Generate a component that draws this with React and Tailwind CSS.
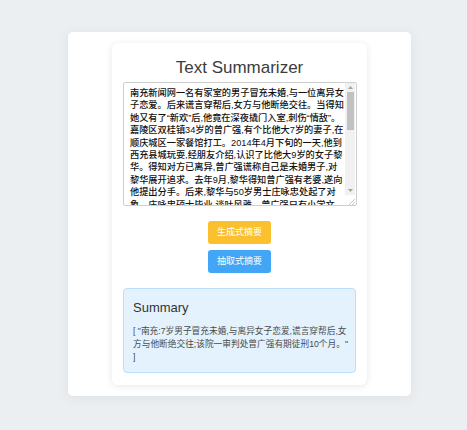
import { useState } from 'react';

const SOURCE_TEXT =
  '南充新闻网一名有家室的男子冒充未婚,与一位离异女子恋爱。后来谎言穿帮后,女方与他断绝交往。当得知她又有了“新欢”后,他竟在深夜撬门入室,刺伤“情敌”。嘉陵区双桂镇34岁的曾广强,有个比他大7岁的妻子,在顺庆城区一家餐馆打工。2014年4月下旬的一天,他到西充县城玩耍,经朋友介绍,认识了比他大9岁的女子黎华。得知对方已离异,曾广强谎称自己是未婚男子,对黎华展开追求。去年9月,黎华得知曾广强有老婆,遂向他提出分手。后来,黎华与50岁男士庄咏忠处起了对象。庄咏忠硕士毕业,谈吐风雅。曾广强只有小学文化,自叹不如。今年1月的一天深夜,曾广强撬门进入黎华家中,持刀将庄咏忠刺伤。';

const SUMMARY =
  '[ "南充:7岁男子冒充未婚,与离异女子恋爱,谎言穿帮后,女方与他断绝交往;该院一审判处曾广强有期徒刑10个月。" ]';

const font = "font-['Liberation_Sans','Noto_Sans_CJK_SC',sans-serif]";

// fake classic scrollbar drawn over the textarea's right edge
const Scrollbar = () => (
  <div className="absolute top-[1px] right-[1px] bottom-[1px] w-[10px] flex flex-col pointer-events-none">
    <div className="h-[9px] bg-[#f1f1f1] flex items-center justify-center">
      <svg width="5" height="3" viewBox="0 0 5 3">
        <polygon points="0,3 2.5,0 5,3" fill="#a3a3a3" />
      </svg>
    </div>
    <div className="flex-1 bg-[#f1f1f1] px-[1.5px]">
      <div className="h-[38px] bg-[#c1c1c1]" />
    </div>
    <div className="h-[9px] bg-[#f1f1f1] flex items-center justify-center">
      <svg width="5" height="3" viewBox="0 0 5 3">
        <polygon points="0,0 5,0 2.5,3" fill="#a3a3a3" />
      </svg>
    </div>
    <div className="h-[10px] bg-white flex items-end justify-end">
      <svg width="7" height="7" viewBox="0 0 7 7">
        <line x1="1" y1="7" x2="7" y2="1" stroke="#b5b5b5" strokeWidth="0.8" />
        <line x1="4" y1="7" x2="7" y2="4" stroke="#b5b5b5" strokeWidth="0.8" />
      </svg>
    </div>
  </div>
);

const App = () => {
  const [text, setText] = useState(SOURCE_TEXT);

  return (
    <div className={`min-h-screen bg-[#eceff1] pt-[32px] ${font}`}>
      <div className="ml-[68px] w-[343px] bg-white rounded-[5px] p-[11px] shadow-[0_2px_14px_rgba(0,0,0,0.06)]">
        <div className="mx-auto w-[255px] bg-white rounded-[6px] px-[11px] pt-[15px] pb-[12px] shadow-[0_1px_7px_rgba(0,0,0,0.1)]">
          <h1 className="text-center text-[17px] leading-[20px] text-[#3c3c3c]">Text Summarizer</h1>

          <div className="relative mt-[4px]">
            <textarea
              value={text}
              onChange={(e) => setText(e.target.value)}
              className="block w-[234px] h-[124px] resize-none overflow-hidden border border-[#cfcfcf] rounded-[2px] pl-[6px] pr-[10.5px] pt-[4px] text-[9.2px] leading-[12.4px] font-medium text-[#111] outline-none"
            />
            <Scrollbar />
          </div>

          <div className="flex flex-col items-center gap-[6px] mt-[15px]">
            <button className="w-[63px] h-[23px] rounded-[3px] bg-[#fbc02d] text-white text-[9px] leading-none">
              生成式摘要
            </button>
            <button className="w-[63px] h-[23px] rounded-[3px] bg-[#42a5f5] text-white text-[9px] leading-none">
              抽取式摘要
            </button>
          </div>

          <div className="mt-[15px] h-[85px] border border-[#bbdefb] bg-[#e3f2fd] rounded-[4px] pl-[9px] pr-[5px] pt-[11px]">
            <h2 className="text-[13px] leading-[16px] text-[#333]">Summary</h2>
            <p className="mt-[9px] text-[8.7px] leading-[13px] text-[#4a4a4a]">{SUMMARY}</p>
          </div>
        </div>
      </div>
    </div>
  );
};

export default App;
